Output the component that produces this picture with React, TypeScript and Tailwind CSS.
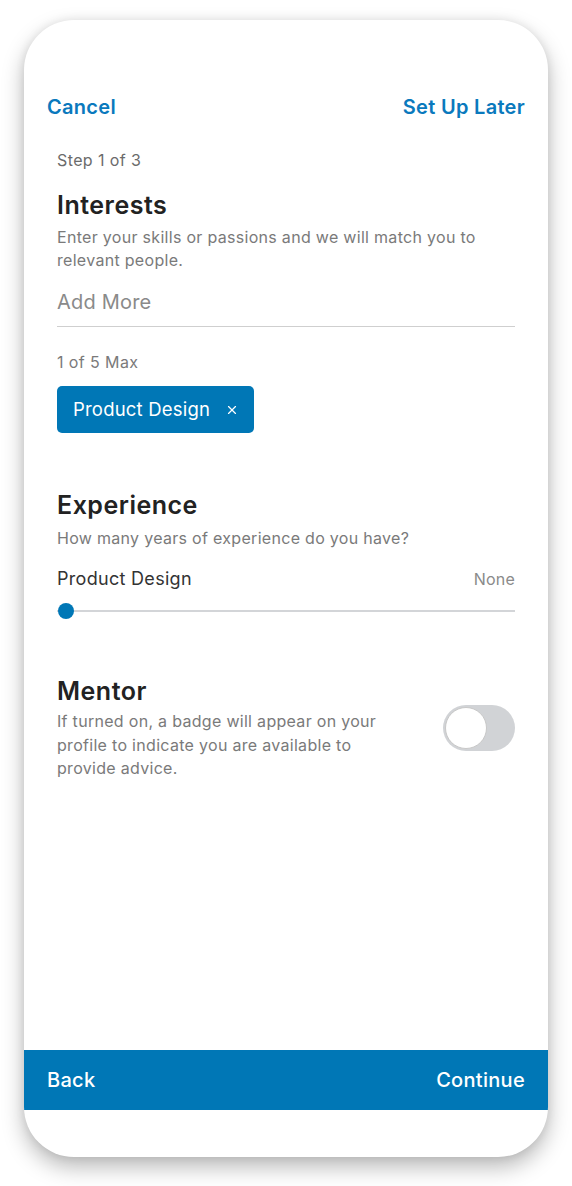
import { X } from "lucide-react";

const font = { fontFamily: "Inter, 'Noto Sans', sans-serif" };

export default function App() {
  return (
    <div className="min-h-[1186px] w-[572px] bg-white pt-[20px] pl-[24px]" style={font}>
      <div className="flex h-[1137px] w-[524px] flex-col overflow-hidden rounded-[50px] bg-white shadow-[0_10px_22px_rgba(0,0,0,0.28),0_0_10px_rgba(0,0,0,0.08)]">
        {/* top nav */}
        <div className="flex items-center justify-between px-[23px] pt-[73px] text-[20px] font-semibold leading-[28px] tracking-[0.3px] text-[#0a79bd]">
          <span>Cancel</span>
          <span>Set Up Later</span>
        </div>

        <div className="px-[33px]">
          <p className="mt-[29px] text-[16px] leading-[20px] tracking-[0.4px] text-[#6b6b6b]">Step 1 of 3</p>

          <h2 className="mt-[19px] text-[25px] font-semibold leading-[32px] tracking-[0.5px] text-[#222]">Interests</h2>
          <p className="mt-[5px] text-[16px] leading-[23px] tracking-[0.3px] text-[#7a7a7a]">
            Enter your skills or passions and we will match you to relevant people.
          </p>

          <div className="mt-[16px] border-b border-[#cfcfcf] pb-[10px] text-[20px] leading-[28px] tracking-[0.2px] text-[#8a8a8a]">
            Add More
          </div>

          <p className="mt-[25px] text-[16px] leading-[20px] tracking-[0.4px] text-[#7a7a7a]">1 of 5 Max</p>

          <div className="mt-[14px] inline-flex h-[47px] items-center gap-[15px] rounded-[5px] bg-[#0077b6] pl-[16px] pr-[15px] text-[18.5px] tracking-[0.2px] text-white">
            <span>Product Design</span>
            <X className="h-[14px] w-[14px]" strokeWidth={2} />
          </div>

          <h2 className="mt-[56px] text-[25px] font-semibold leading-[32px] tracking-[0.5px] text-[#222]">Experience</h2>
          <p className="mt-[6px] text-[16px] leading-[22px] tracking-[0.3px] text-[#7a7a7a]">
            How many years of experience do you have?
          </p>

          <div className="mt-[18px] flex items-center justify-between leading-[24px]">
            <span className="text-[18px] tracking-[0.3px] text-[#333]">Product Design</span>
            <span className="text-[16px] tracking-[0.2px] text-[#8a8a8a]">None</span>
          </div>

          <div className="relative mt-[12px] flex h-[16px] items-center">
            <div className="h-[2px] w-full bg-[#d3d5d8]" />
            <div className="absolute left-[1px] top-0 h-[16px] w-[16px] rounded-full bg-[#0077b6]" />
          </div>

          <div className="mt-[56px] flex items-center justify-between">
            <div className="w-[330px]">
              <h2 className="text-[25px] font-semibold leading-[32px] tracking-[0.5px] text-[#222]">Mentor</h2>
              <p className="mt-[3px] text-[16px] leading-[23.5px] tracking-[0.3px] text-[#7a7a7a]">
                If turned on, a badge will appear on your profile to indicate you are available to provide advice.
              </p>
            </div>
            <div className="flex h-[46px] w-[72px] items-center rounded-full bg-[#d1d3d6] p-[2px]">
              <div className="h-[42px] w-[42px] rounded-full border border-[#c8c8c8] bg-white" />
            </div>
          </div>
        </div>

        <div className="flex-1" />

        <div className="flex h-[60px] items-center justify-between bg-[#0077b6] px-[23px] text-[20px] font-medium tracking-[0.3px] text-white">
          <span>Back</span>
          <span>Continue</span>
        </div>
        <div className="h-[47px]" />
      </div>
    </div>
  );
}
